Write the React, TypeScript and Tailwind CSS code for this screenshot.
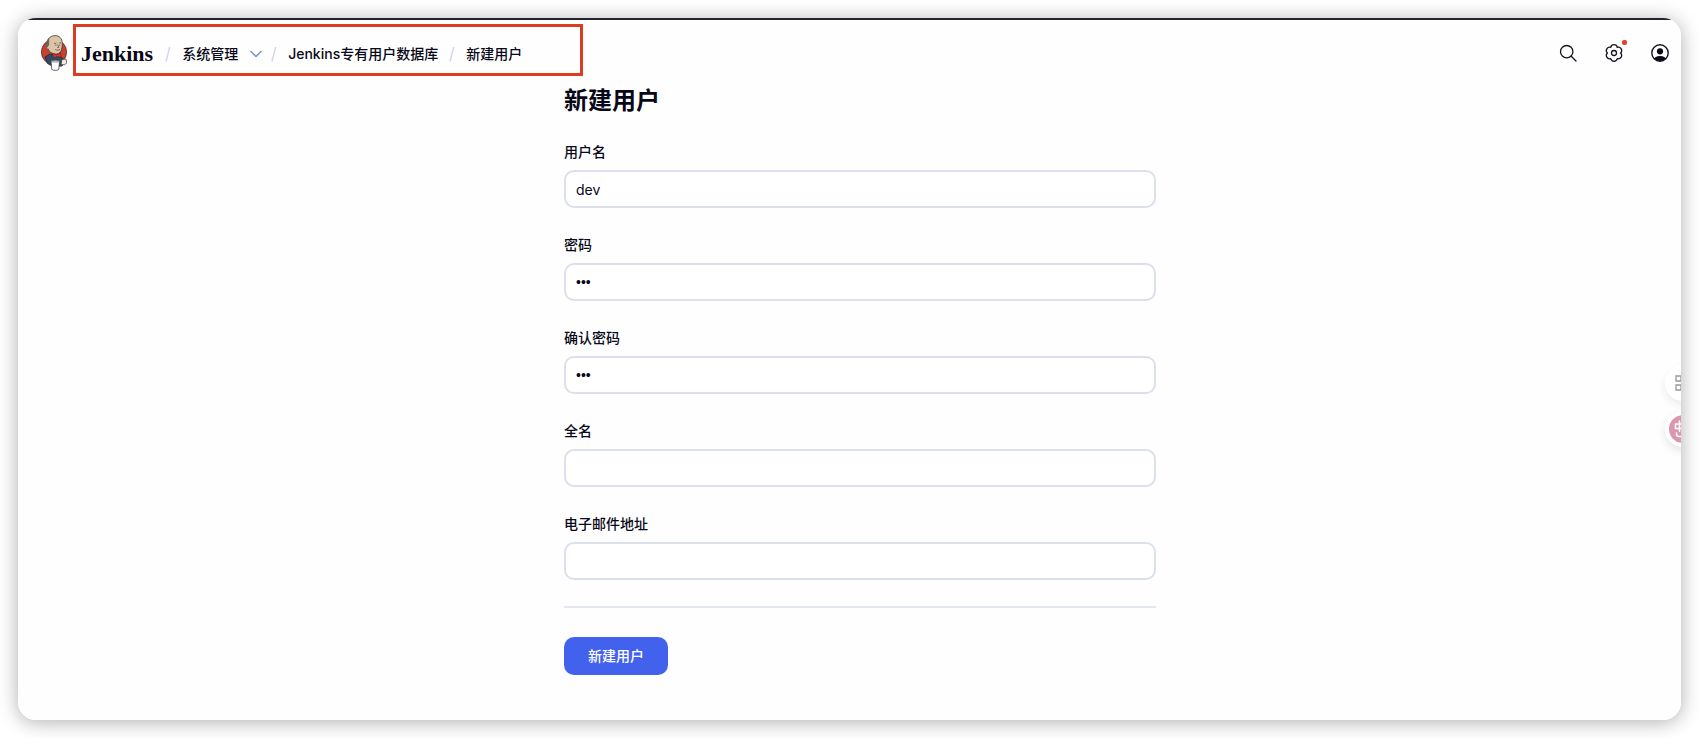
import type { ReactNode } from "react";

interface FieldData {
  id: string;
  label: string;
  type: string;
  value: string;
}

const fields: FieldData[] = [
  { id: "username", label: "用户名", type: "text", value: "dev" },
  { id: "password1", label: "密码", type: "password", value: "dev" },
  { id: "password2", label: "确认密码", type: "password", value: "dev" },
  { id: "fullname", label: "全名", type: "text", value: "" },
  { id: "email", label: "电子邮件地址", type: "email", value: "" },
];

function JenkinsLogo() {
  return (
    <svg width="26" height="36" viewBox="0 0 26 36" aria-hidden="true">
      <ellipse cx="13" cy="17" rx="12.6" ry="12.6" fill="#c8402f" stroke="#5c2a26" strokeWidth="0.8" />
      {/* suit */}
      <path d="M4 22 9 19l7 2 5 1.500 2 2.500v3l-2 3-9 .5-5.500-3z" fill="#2f4a62" stroke="#1e2833" strokeWidth="0.8" />
      {/* head */}
      <path
        d="M6 12C4.500 5 9 .6 14 .6c4.500 0 7 3 7.200 7 .2 3-.1 6-1.200 8.400-1 2.200-3.500 3.400-6 3-3.500-.5-6-2.500-7-5z"
        fill="#dcc5a6"
        stroke="#3e3a38"
        strokeWidth="0.8"
      />
      <path d="M5.700 12.500C4.600 9 5.400 5 8.500 2.800 7.500 6 8.800 8 7.900 10.500z" fill="#6b6660" />
      <path d="M6.500 11.500c-1.300 0-1.600 2.500.8 3" fill="#dcc5a6" stroke="#3e3a38" strokeWidth="0.6" />
      <path
        d="M13 8.500l2.500-.4M18 8l2-.2M14 10.200h1.500M18 10.200h1.300M16.800 9.500l1 3h-1.500M14.200 14.500c1.500 1 3.500.8 4.800 0"
        fill="none"
        stroke="#4b403a"
        strokeWidth="0.7"
      />
      {/* bow tie */}
      <path d="M11.500 18.300l4 1.500 4-2 .4 4.400-4-.8-3.400 1.400z" fill="#d33833" stroke="#701b18" strokeWidth="0.6" />
      {/* cup and hand */}
      <path d="M21 24.500l4-.5.8 4-2.300 1.700H20z" fill="#f2ece6" stroke="#3e3a38" strokeWidth="0.7" />
      <path d="M10 26h8.500l-.7 8.500c-1.500 1.200-5.500 1.200-7 0z" fill="#fff" stroke="#444" strokeWidth="0.8" />
      <ellipse cx="14.200" cy="26.200" rx="4.300" ry="0.900" fill="#d8d8d8" stroke="#444" strokeWidth="0.5" />
    </svg>
  );
}

function Slash() {
  return (
    <svg width="6" height="16" viewBox="0 0 6 16" fill="none" aria-hidden="true">
      <path d="M4.700 1 1 15.500" stroke="#d3d9e8" strokeWidth="1.500" />
    </svg>
  );
}

function Chevron() {
  return (
    <svg width="12" height="8" viewBox="0 0 12 8" fill="none" aria-hidden="true">
      <path
        d="M1 1.500l5 5 5-5"
        stroke="#7794c0"
        strokeWidth="1.500"
        strokeLinecap="round"
        strokeLinejoin="round"
      />
    </svg>
  );
}

function SearchIcon() {
  return (
    <svg width="18" height="18" viewBox="0 0 18 18" fill="none" stroke="#14141f" strokeWidth="1.300">
      <circle cx="7.700" cy="7.700" r="6.200" />
      <path d="M12.200 12.200l4.800 4.800" strokeLinecap="round" />
    </svg>
  );
}

function GearIcon() {
  return (
    <svg width="18" height="18" viewBox="0 0 18 18" fill="none" stroke="#14141f" strokeWidth="1.300">
      <path
        d="M15.600 9A3.400 3.400 0 0 1 12.300 14.700A3.400 3.400 0 0 1 5.700 14.700A3.400 3.400 0 0 1 2.400 9A3.400 3.400 0 0 1 5.700 3.300A3.400 3.400 0 0 1 12.300 3.300A3.400 3.400 0 0 1 15.600 9Z"
        strokeLinejoin="round"
      />
      <circle cx="9" cy="9" r="2.500" />
    </svg>
  );
}

function PersonIcon() {
  return (
    <svg width="18" height="18" viewBox="0 0 18 18">
      <clipPath id="avatar-clip">
        <circle cx="9" cy="9" r="8" />
      </clipPath>
      <circle cx="9" cy="9" r="8.200" fill="none" stroke="#14141f" strokeWidth="1.400" />
      <circle cx="9" cy="7.300" r="3.100" fill="#0a0a18" />
      <ellipse cx="9" cy="16.500" rx="6.500" ry="4.500" fill="#0a0a18" clipPath="url(#avatar-clip)" />
    </svg>
  );
}

function HeaderButton({ label, children }: { label: string; children: ReactNode }) {
  return (
    <button type="button" aria-label={label} className="relative size-[18px]">
      {children}
    </button>
  );
}

function Field({ id, label, type, value }: FieldData) {
  return (
    <div className="flex flex-col gap-2">
      <label htmlFor={id} className="text-sm leading-5 font-medium">
        {label}
      </label>
      <input
        id={id}
        type={type}
        defaultValue={value}
        className={
          type === "password"
            ? "h-[38px] w-full rounded-[10px] border-2 border-[#dce0ed] bg-white px-[10px] font-['Liberation_Sans',sans-serif] text-sm"
            : "h-[38px] w-full rounded-[10px] border-2 border-[#dce0ed] bg-white px-[10px] text-sm"
        }
      />
    </div>
  );
}

export default function App() {
  return (
    <div className="bg-white p-[18px] font-[Inter,'Noto_Sans_CJK_SC',sans-serif] text-[#080818]">
      <div className="rounded-[18px] shadow-[0_2px_20px_rgba(0,0,0,0.32)]">
        <div className="relative overflow-hidden rounded-[18px] bg-[#fefefe]">
          <div className="h-[2px] bg-[#24242e]" />
          <header className="flex items-center justify-between pt-1 pr-3 pl-[23px]">
            <div className="flex items-center gap-[6px]">
              <a href="#" aria-label="Jenkins" className="pt-[6px]">
                <JenkinsLogo />
              </a>
              <nav className="flex h-[52px] w-[510px] items-center border-3 border-[#dc3d22] pt-2 pl-[5px] text-sm font-medium">
                <a
                  href="#"
                  className="mr-3 font-['Liberation_Serif',serif] text-[22px] leading-6 font-bold"
                >
                  Jenkins
                </a>
                <Slash />
                <a href="#" className="ml-[11px]">
                  系统管理
                </a>
                <button type="button" aria-label="展开" className="mr-[9px] ml-3">
                  <Chevron />
                </button>
                <Slash />
                <a href="#" className="mx-[11px]">
                  Jenkins专有用户数据库
                </a>
                <Slash />
                <a href="#" className="ml-[11px]">
                  新建用户
                </a>
              </nav>
            </div>
            <div className="flex items-center gap-7 pt-[6px]">
              <HeaderButton label="搜索">
                <SearchIcon />
              </HeaderButton>
              <HeaderButton label="系统管理">
                <GearIcon />
                <span className="absolute -top-1 -right-1 size-[5px] rounded-[2px] bg-[#e0402c]" />
              </HeaderButton>
              <HeaderButton label="用户">
                <PersonIcon />
              </HeaderButton>
            </div>
          </header>

          <main className="pt-[9px] pb-[45px] pl-[21px]">
            <form className="mx-auto max-w-[592px]">
              <h1 className="text-2xl leading-8 font-bold">新建用户</h1>
              <div className="mt-[25px] flex flex-col gap-[27px]">
                {fields.map((field) => (
                  <Field key={field.id} {...field} />
                ))}
              </div>
              <hr className="mt-[26px] border-t-2 border-[#e3e7f1]" />
              <button
                type="button"
                className="mt-[29px] block h-[38px] rounded-[10px] bg-[#4262ed] px-6 text-sm font-medium text-white"
              >
                新建用户
              </button>
            </form>
          </main>

          {/* floating tools, half hidden behind the right edge */}
          <div className="absolute top-[347px] -right-5 flex flex-col gap-[10px]">
            <button
              type="button"
              aria-label="工具"
              className="flex size-9 items-center justify-center rounded-full bg-white shadow-[0_4px_8px_rgba(0,0,0,0.08)]"
            >
              <svg width="16" height="16" viewBox="0 0 16 16" fill="none" stroke="#999" strokeWidth="1.300">
                <path d="M1 1h5v5H1zM10 1h5v5h-5zM1 10h5v5H1zM10 10h5v5h-5z" />
              </svg>
            </button>
            <button
              type="button"
              aria-label="翻译"
              className="flex size-9 items-center justify-center rounded-full bg-white shadow-[0_4px_8px_rgba(0,0,0,0.1)]"
            >
              <svg width="28" height="28" viewBox="0 0 28 28" fill="none">
                <circle cx="14" cy="14" r="14" fill="#dc96ae" />
                <path
                  d="M6.500 9h8v4.500h-8zM10.500 6v10.500M7.500 18v1c0 1.500 1 2.500 2.500 2.500h3"
                  stroke="#fff"
                  strokeWidth="1.500"
                  strokeLinecap="round"
                />
              </svg>
            </button>
          </div>
        </div>
      </div>
    </div>
  );
}
